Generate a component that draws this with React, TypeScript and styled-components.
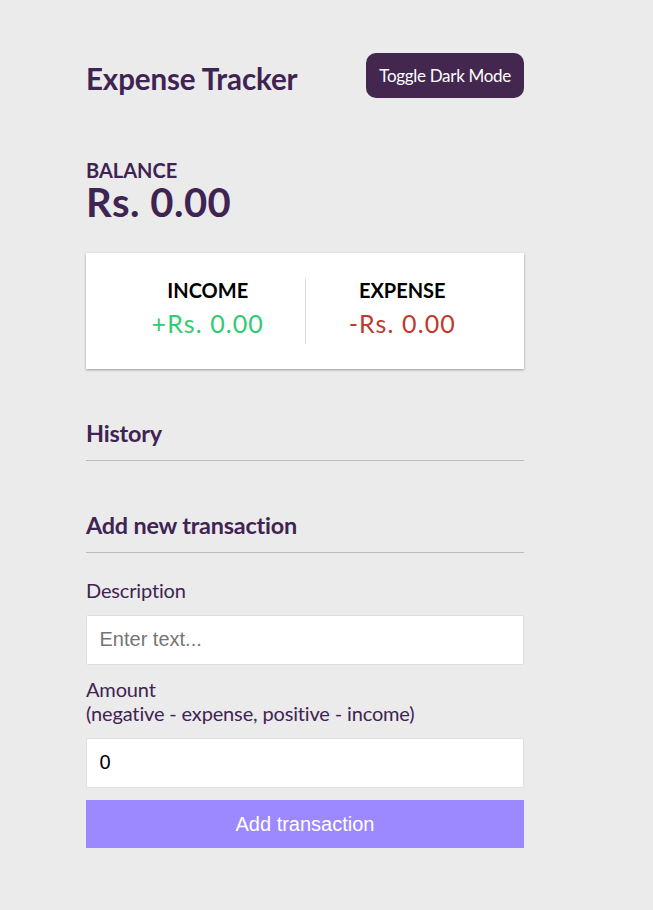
import React from "react";
import styled, { createGlobalStyle } from "styled-components";

const GlobalStyle = createGlobalStyle`
  * { box-sizing: border-box; }
  html, body { margin: 0; padding: 0; }
  body {
    background-color: #ebebeb;
    font-family: Lato, "Open Sans", sans-serif;
    color: #3f2352;
  }
`;

const Container = styled.div`
  width: 438px;
  margin: 0 0 30px 86px;
  padding-top: 53px;
`;

const Header = styled.header`
  display: flex;
  align-items: center;
  justify-content: space-between;
  height: 45px;
`;

const Title = styled.h1`
  margin: 0;
  padding-top: 6px;
  font-size: 29.5px;
  font-weight: 700;
  letter-spacing: -0.1px;
  color: #3f2352;
`;

const ToggleButton = styled.button`
  height: 45px;
  padding: 0 13px;
  border: 0;
  border-radius: 10px;
  background: #44274f;
  color: #ffffff;
  font-family: Lato, sans-serif;
  font-size: 17px;
  letter-spacing: -0.3px;
  cursor: pointer;
`;

const BalanceLabel = styled.h4`
  margin: 62px 0 0;
  font-size: 20px;
  line-height: 20px;
  font-weight: 700;
  text-transform: uppercase;
  color: #3f2352;
`;

const BalanceValue = styled.h1`
  margin: 0;
  font-size: 40px;
  line-height: 44px;
  font-weight: 700;
  letter-spacing: 0.5px;
  color: #3f2352;
`;

const Card = styled.div`
  display: flex;
  margin-top: 29px;
  padding: 25px 25px;
  background: #ffffff;
  box-shadow: 0 1px 3px rgba(0, 0, 0, 0.12), 0 1px 2px rgba(0, 0, 0, 0.24);
`;

const Column = styled.div<{ $divider?: boolean }>`
  flex: 1;
  text-align: center;
  border-right: ${(p) => (p.$divider ? "1px solid #dedede" : "none")};
`;

const ColumnTitle = styled.h4`
  margin: 0;
  font-size: 20px;
  line-height: 24px;
  font-weight: 700;
  text-transform: uppercase;
  color: #000000;
`;

const Money = styled.p<{ $tone: "plus" | "minus" }>`
  margin: 6px 0;
  font-size: 25px;
  line-height: 30px;
  letter-spacing: 1.1px;
  color: ${(p) => (p.$tone === "plus" ? "#2ecc71" : "#c0392b")};
`;

const SectionTitle = styled.h3`
  margin: 50px 0 12.5px;
  padding-bottom: 13px;
  border-bottom: 1px solid #bbbbbb;
  font-size: 23.4px;
  line-height: 28px;
  font-weight: 700;
  letter-spacing: -0.2px;
  color: #3f2352;
`;

const FormControl = styled.div``;

const Label = styled.label`
  display: inline-block;
  margin: 12.5px 0;
  font-size: 20px;
  line-height: 24px;
  letter-spacing: -0.15px;
  color: #3f2352;
`;

const Input = styled.input`
  display: block;
  width: 100%;
  padding: 12.5px;
  border: 1px solid #dedede;
  border-radius: 2px;
  background: #ffffff;
  font-family: "Liberation Sans", Arial, sans-serif;
  font-size: 20px;
  line-height: 23px;
  color: #000000;
  outline: none;
  &::placeholder { color: #757575; }
`;

const SubmitButton = styled.button`
  display: block;
  width: 100%;
  margin: 12.5px 0 37px;
  padding: 12.5px;
  border: 0;
  background-color: #9c88ff;
  color: #ffffff;
  font-family: "Liberation Sans", Arial, sans-serif;
  font-size: 20px;
  line-height: 23px;
  cursor: pointer;
`;

export default function App() {
  return (
    <>
      <GlobalStyle />
      <Container>
        <Header>
          <Title>Expense Tracker</Title>
          <ToggleButton>Toggle Dark Mode</ToggleButton>
        </Header>
        <BalanceLabel>Balance</BalanceLabel>
        <BalanceValue>Rs. 0.00</BalanceValue>
        <Card>
          <Column $divider>
            <ColumnTitle>Income</ColumnTitle>
            <Money $tone="plus">+Rs. 0.00</Money>
          </Column>
          <Column>
            <ColumnTitle>Expense</ColumnTitle>
            <Money $tone="minus">-Rs. 0.00</Money>
          </Column>
        </Card>
        <SectionTitle>History</SectionTitle>
        <SectionTitle>Add new transaction</SectionTitle>
        <form onSubmit={(e) => e.preventDefault()}>
          <FormControl>
            <Label htmlFor="text">Description</Label>
            <Input type="text" id="text" placeholder="Enter text..." />
          </FormControl>
          <FormControl>
            <Label htmlFor="amount">
              Amount <br />
              (negative - expense, positive - income)
            </Label>
            <Input type="number" id="amount" defaultValue={0} />
          </FormControl>
          <SubmitButton>Add transaction</SubmitButton>
        </form>
      </Container>
    </>
  );
}
